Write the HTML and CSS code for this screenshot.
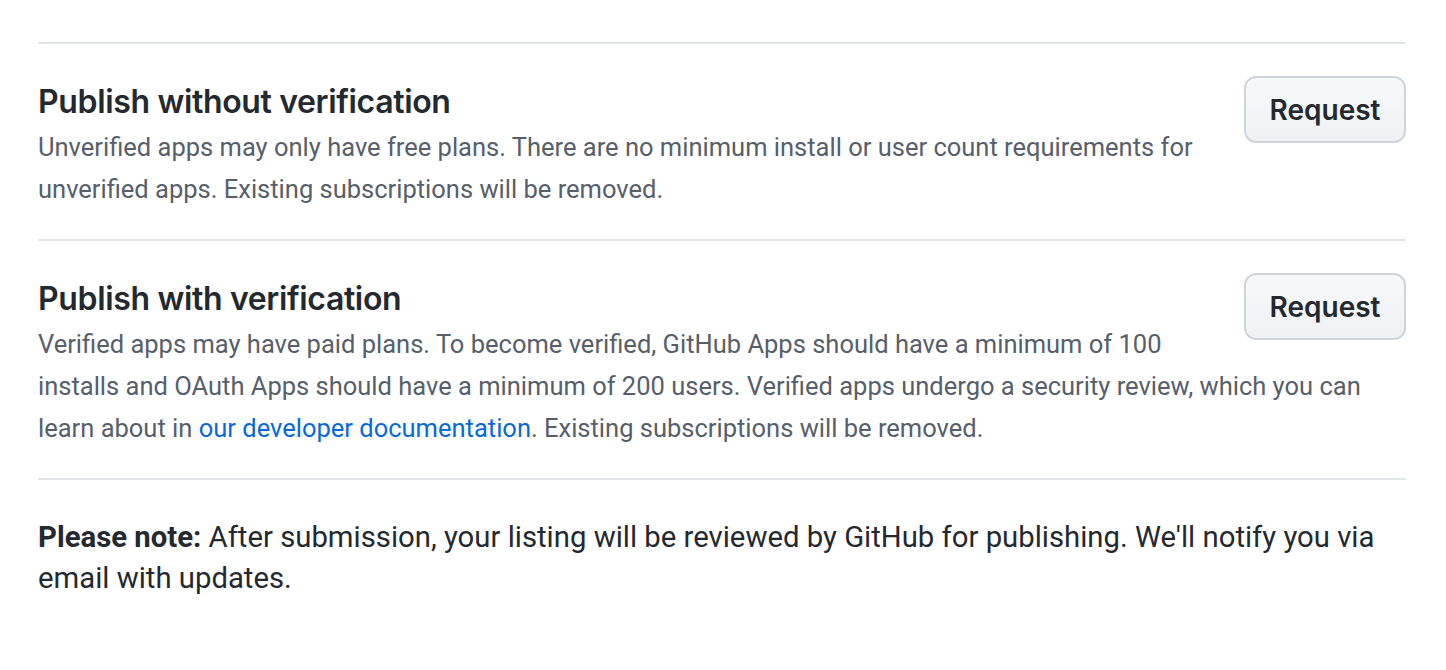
FILE: index.html
```html
<!DOCTYPE html>
<html lang="en">
<head>
<meta charset="utf-8">
<title>Publish listing</title>
<link rel="stylesheet" href="styles.css">
</head>
<body>
<main class="page">
  <section class="row">
    <button class="btn">Request</button>
    <h3 class="row-title">Publish without verification</h3>
    <p class="row-desc">Unverified apps may only have free plans. There are no minimum install or user count requirements for unverified apps. Existing subscriptions will be removed.</p>
  </section>
  <section class="row">
    <button class="btn">Request</button>
    <h3 class="row-title">Publish with verification</h3>
    <p class="row-desc">Verified apps may have paid plans. To become verified, GitHub Apps should have a minimum of 100 installs and OAuth Apps should have a minimum of 200 users. Verified apps undergo a security review, which you can learn about in <a class="link" href="#">our developer documentation</a>. Existing subscriptions will be removed.</p>
  </section>
  <p class="note"><strong>Please note:</strong> After submission, your listing will be reviewed by GitHub for publishing. We'll notify you via email with updates.</p>
</main>
</body>
</html>
```

FILE: styles.css
```css
* { box-sizing: border-box; }
html, body { margin: 0; padding: 0; background: #ffffff; }
body {
  font-family: Roboto, "Noto Sans", "Liberation Sans", sans-serif;
  color: #24292f;
}
.page {
  margin: 0 40px 0 38px;
  padding-top: 42px;
}
.row {
  border-top: 2px solid #e1e4e8;
  padding: 32px 0 29px;
}
.row::after { content: ""; display: block; clear: both; }
.btn {
  float: right;
  margin-left: 32px;
  width: 162px;
  height: 67px;
  font-family: Inter, Roboto, sans-serif;
  font-size: 28px;
  font-weight: 600;
  color: #24292f;
  background: linear-gradient(#f6f8fa, #eff2f5);
  border: 2px solid #d0d4da;
  border-radius: 12px;
  padding: 0;
}
.row-title {
  margin: 6px 0 0;
  font-family: Inter, Roboto, sans-serif;
  font-size: 32px;
  line-height: 40px;
  font-weight: 600;
  letter-spacing: -0.35px;
  color: #24292f;
}
.row-desc {
  margin: 4px 0 0;
  font-size: 25.5px;
  line-height: 42px;
  color: #57606a;
}
.link { color: #0969da; text-decoration: none; }
.note {
  margin: 0;
  border-top: 2px solid #e1e4e8;
  padding-top: 37px;
  font-size: 29.3px;
  line-height: 41px;
  color: #24292f;
}
.note strong { font-weight: 700; }
```
